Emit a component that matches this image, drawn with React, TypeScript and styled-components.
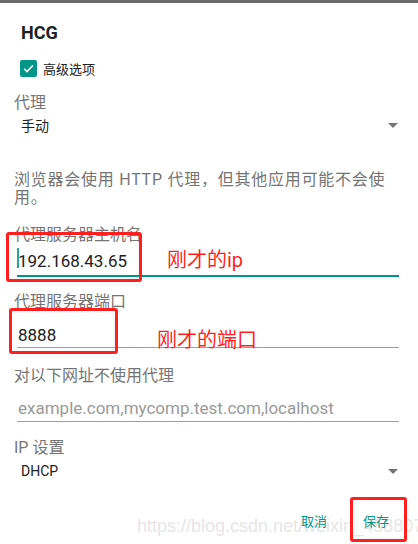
import React from "react";
import styled, { createGlobalStyle } from "styled-components";

const Global = createGlobalStyle`
  html, body { margin: 0; padding: 0; background: #ffffff; }
  body { font-family: Roboto, "Noto Sans CJK SC", sans-serif; }
  * { box-sizing: border-box; }
`;

const Page = styled.div`
  position: relative;
  width: 418px;
  height: 544px;
  overflow: hidden;
  background: #ffffff;
  display: flex;
  flex-direction: column;
`;

const TopBar = styled.div`
  height: 3px;
  background: #6a6a6a;
  flex: none;
`;

const Title = styled.div`
  margin: 19px 0 0 21px;
  height: 22px;
  line-height: 22px;
  font-size: 18px;
  font-weight: 700;
  color: #212121;
`;

const CheckRow = styled.label`
  margin: 12px 0 0 20px;
  height: 24px;
  display: flex;
  align-items: center;
  gap: 6px;
  font-size: 13px;
  color: #212121;
`;

const CheckBox = styled.span`
  width: 17px;
  height: 17px;
  border-radius: 2px;
  background: #009688;
  display: flex;
  align-items: center;
  justify-content: center;
`;

const Body = styled.div`
  padding: 0 19px 0 14px;
  display: flex;
  flex-direction: column;
`;

const Label = styled.div<{ $top: number }>`
  margin-top: ${(p) => p.$top}px;
  height: 20px;
  line-height: 20px;
  font-size: 16px;
  color: #757575;
  white-space: nowrap;
`;

const SelectRow = styled.div<{ $top: number }>`
  margin-top: ${(p) => p.$top}px;
  height: 20px;
  padding-left: 7px;
  display: flex;
  align-items: center;
  justify-content: space-between;
  font-size: 14px;
  color: #212121;
`;

const Arrow = styled.span`
  width: 0;
  height: 0;
  border-left: 5px solid transparent;
  border-right: 5px solid transparent;
  border-top: 5px solid #757575;
  margin-right: 1px;
`;

const Note = styled.p`
  margin: 36px 0 0 0;
  font-size: 16px;
  line-height: 18px;
  letter-spacing: 0.75px;
  color: #757575;
`;

const Field = styled.div<{ $top: number; $h: number; $pb: number; $focused?: boolean }>`
  margin: ${(p) => p.$top}px 0 0 3px;
  height: ${(p) => p.$h}px;
  position: relative;
  display: flex;
  align-items: flex-end;
  padding: 0 0 ${(p) => p.$pb}px 1px;
  border-bottom: ${(p) => (p.$focused ? "2px solid #009688" : "1px solid #9e9e9e")};
`;

const FieldText = styled.span<{ $hint?: boolean }>`
  font-size: 17px;
  line-height: 20px;
  color: ${(p) => (p.$hint ? "#9a9a9a" : "#212121")};
  white-space: nowrap;
`;

const Cursor = styled.span`
  position: absolute;
  left: 0;
  bottom: 7px;
  width: 2px;
  height: 20px;
  background: #26a69a;
`;

const Actions = styled.div`
  margin-top: 31px;
  padding-right: 10px;
  display: flex;
  justify-content: flex-end;
  gap: 36px;
  font-size: 13px;
  line-height: 20px;
  color: #009688;
`;

const ActionButton = styled.span`
  position: relative;
  z-index: 2;
`;

const Mark = styled.div<{ $x: number; $y: number; $w: number; $h: number }>`
  position: absolute;
  left: ${(p) => p.$x}px;
  top: ${(p) => p.$y}px;
  width: ${(p) => p.$w}px;
  height: ${(p) => p.$h}px;
  border: 3px solid #ff1f1f;
  border-radius: 3px;
  z-index: 3;
`;

const Note2 = styled.div<{ $x: number; $y: number }>`
  position: absolute;
  left: ${(p) => p.$x}px;
  top: ${(p) => p.$y}px;
  font-size: 20px;
  line-height: 24px;
  color: #ff1f1f;
  white-space: nowrap;
  z-index: 3;
`;

const Watermark = styled.div`
  position: absolute;
  left: 137px;
  top: 515px;
  font-family: "Liberation Sans", Arial, sans-serif;
  font-size: 18px;
  line-height: 22px;
  color: #e6e6e6;
  white-space: nowrap;
  z-index: 1;
`;

export default function App() {
  return (
    <>
      <Global />
      <Page>
        <TopBar />
        <Title>HCG</Title>
        <CheckRow>
          <CheckBox>
            <svg width="13" height="13" viewBox="0 0 24 24" fill="none">
              <path d="M4 12.5l5 5L20 6.5" stroke="#fff" strokeWidth="3" />
            </svg>
          </CheckBox>
          高级选项
        </CheckRow>
        <Body>
          <Label $top={13}>代理</Label>
          <SelectRow $top={2}>
            <span>手动</span>
            <Arrow />
          </SelectRow>
          <Note>浏览器会使用 HTTP 代理，但其他应用可能不会使用。</Note>
          <Label $top={18}>代理服务器主机名</Label>
          <Field $top={0} $h={32} $pb={4} $focused>
            <Cursor />
            <FieldText>192.168.43.65</FieldText>
          </Field>
          <Label $top={15}>代理服务器端口</Label>
          <Field $top={0} $h={36} $pb={2}>
            <FieldText>8888</FieldText>
          </Field>
          <Label $top={18}>对以下网址不使用代理</Label>
          <Field $top={0} $h={36} $pb={3}>
            <FieldText $hint>example.com,mycomp.test.com,localhost</FieldText>
          </Field>
          <Label $top={16}>IP 设置</Label>
          <SelectRow $top={3}>
            <span>DHCP</span>
            <Arrow />
          </SelectRow>
          <Actions>
            <ActionButton>取消</ActionButton>
            <ActionButton>保存</ActionButton>
          </Actions>
        </Body>
        <Watermark>https://blog.csdn.net/weixin_45880718</Watermark>
        <Mark $x={6} $y={232} $w={136} $h={50} />
        <Mark $x={9} $y={308} $w={109} $h={46} />
        <Mark $x={350} $y={497} $w={57} $h={45} />
        <Note2 $x={167} $y={248}>刚才的ip</Note2>
        <Note2 $x={157} $y={328}>刚才的端口</Note2>
      </Page>
    </>
  );
}
